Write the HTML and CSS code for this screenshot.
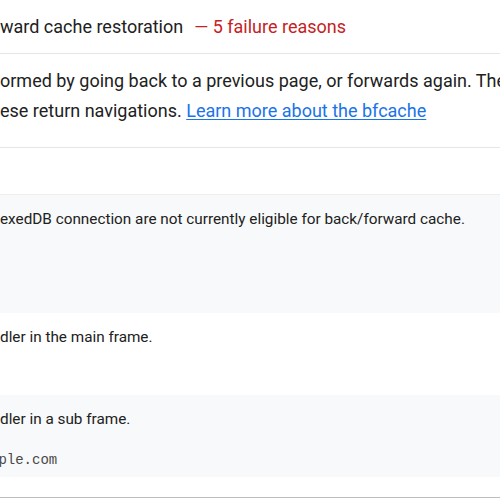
FILE: index.html
```html
<!DOCTYPE html>
<html lang="en">
<head>
<meta charset="utf-8">
<title>Page prevented back/forward cache restoration</title>
<link rel="stylesheet" href="styles.css">
</head>
<body>
<div class="audit">
  <div class="audit-header">
    <span class="audit-title">ward cache restoration</span>
    <span class="audit-fail">— 5 failure reasons</span>
  </div>
  <div class="audit-desc">
    <div class="line">ormed by going back to a previous page, or forwards again. The back/forward cache</div>
    <div class="line">ese return navigations. <a class="link" href="#">Learn more about the bfcache</a></div>
  </div>
  <div class="table">
    <div class="row row-head"></div>
    <div class="row row-gray row-tall">
      <div class="cell">exedDB connection are not currently eligible for back/forward cache.</div>
    </div>
    <div class="row row-white row-mid">
      <div class="cell">dler in the main frame.</div>
    </div>
    <div class="row row-gray row-mid">
      <div class="cell">dler in a sub frame.</div>
      <div class="cell code">mple.com</div>
    </div>
    <div class="row row-foot"></div>
  </div>
</div>
</body>
</html>
```
FILE: styles.css
```css
html, body {
  margin: 0;
  padding: 0;
  background: #ffffff;
}
body {
  width: 500px;
  height: 500px;
  overflow: hidden;
  font-family: Roboto, "Liberation Sans", sans-serif;
  color: #212121;
}
.audit {
  width: 500px;
  overflow: hidden;
}
.audit-header {
  height: 53px;
  border-bottom: 1px solid #e6e6e6;
  display: flex;
  align-items: center;
  padding-left: 0;
  font-size: 18px;
  white-space: nowrap;
}
.audit-fail {
  color: #c5221f;
  margin-left: 11px;
}
.audit-desc {
  padding: 12px 0 21px 0;
  border-bottom: 1px solid #e6e6e6;
  font-size: 18px;
  line-height: 30px;
  white-space: nowrap;
}
.line {
  padding-left: 0;
}
.link {
  color: #1a73e8;
  text-decoration: underline;
  text-underline-offset: 2px;
}
.table {
  font-size: 15.3px;
  white-space: nowrap;
}
.row {
  box-sizing: border-box;
}
.row-head {
  height: 46px;
}
.row-gray {
  background: #f8f9fa;
}
.row-tall {
  height: 119px;
  padding-top: 14px;
  border-top: 1px solid #eeeeee;
}
.row-mid {
  height: 82px;
  padding-top: 14px;
}
.row-white {
  background: #ffffff;
}
.cell {
  line-height: 20px;
  padding-left: 0;
}
.code {
  font-family: "Liberation Mono", monospace;
  font-size: 14px;
  color: #4a4a4a;
  margin-top: 21px;
  text-indent: -10px;
}
.row-foot {
  height: 21px;
  border-bottom: 1px solid #bdbdbd;
}
```
